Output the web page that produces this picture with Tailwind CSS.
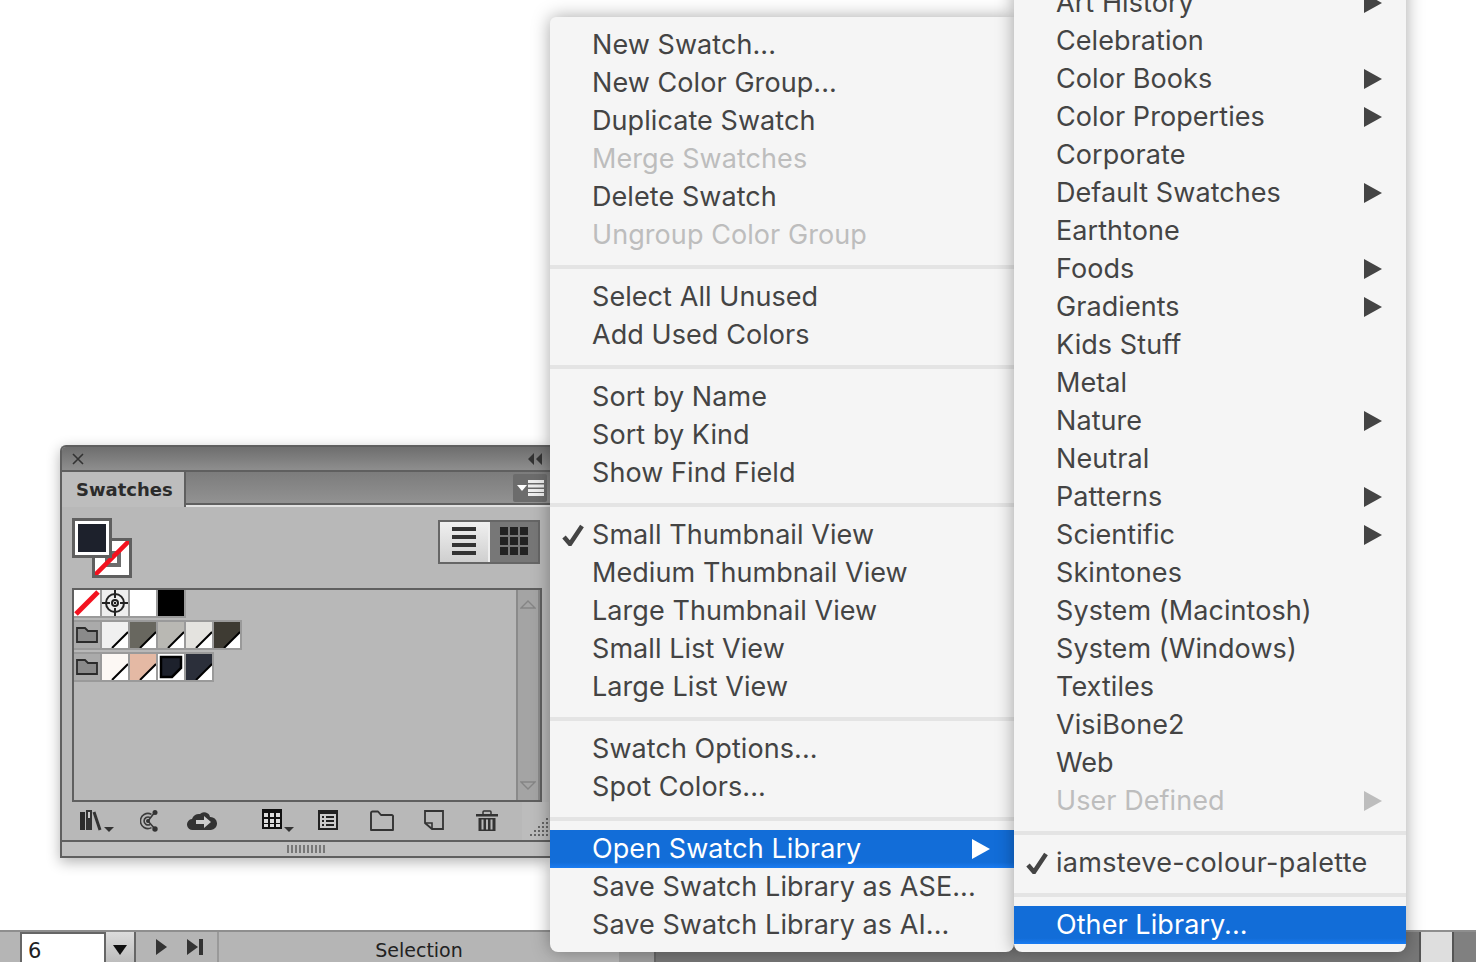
<!DOCTYPE html>
<html lang="en">
<head>
  <meta charset="UTF-8">
  <title>Swatches menu</title>
  <script src="https://cdn.jsdelivr.net/npm/@tailwindcss/browser@4"></script>
</head>
<body class="bg-white">
<div class="relative flex h-[962px] w-[1476px] flex-col justify-end overflow-hidden bg-white">

  <!-- status bar -->
  <div class="flex h-[32px] items-stretch border-t-2 border-[#8e8e8e] bg-[#b5b5b5] font-['DejaVu_Sans',sans-serif] text-[#222]">
    <div class="w-[20px]"></div>
    <div class="flex w-[86px] items-center border-x-2 border-t-2 border-[#666] bg-white pl-[6px] pt-[7px] text-[21px]">6</div>
    <div class="flex w-[30px] items-center justify-center border-r-2 border-[#666] bg-gradient-to-b from-[#dcdcdc] to-[#bdbdbd] pt-[6px]">
      <svg width="14" height="10" viewBox="0 0 14 10"><path d="M0 0h14L7 10z" fill="#111"/></svg>
    </div>
    <div class="flex w-[83px] items-center gap-[20px] border-r-2 border-[#999] pl-[20px]">
      <svg width="11" height="16" viewBox="0 0 11 16"><path d="M0 0l11 8-11 8z" fill="#333"/></svg>
      <svg width="17" height="16" viewBox="0 0 17 16"><path d="M0 0l11 8-11 8z" fill="#333"/><path d="M12 0h4v16h-4z" fill="#333"/></svg>
    </div>
    <div class="flex w-[400px] justify-center pt-[4px] text-[19px]">Selection</div>
    <div class="w-[37px] border-r-2 border-[#666] bg-[#9f9f9f]"></div>
    <div class="flex-1 bg-[#777]"></div>
    <div class="w-[2px] bg-[#555]"></div>
    <div class="w-[31px] bg-[#dedede]"></div>
    <div class="w-[2px] bg-[#555]"></div>
    <div class="w-[22px] bg-[#808080]"></div>
  </div>

  <!-- swatches panel -->
  <div class="absolute left-[60px] top-[445px] flex h-[413px] w-[490px] flex-col rounded-tl-[6px] border-2 border-r-0 border-[#5f5f5f] bg-[#b8b8b8] shadow-[0_4px_14px_rgba(0,0,0,0.3)]">
    <div class="flex h-[25px] shrink-0 items-center justify-between rounded-tl-[4px] border-b-2 border-[#5f5f5f] bg-gradient-to-b from-[#6e6e6e] to-[#8e8e8e] pl-[10px] pr-[8px]">
      <svg width="12" height="12" viewBox="0 0 12 12"><path d="M1 1l10 10M11 1L1 11" stroke="#333" stroke-width="1.6"/></svg>
      <svg width="14" height="12" viewBox="0 0 14 12"><path d="M6 0v12L0 6zM14 0v12L8 6z" fill="#333"/></svg>
    </div>

    <div class="flex h-[35px] shrink-0">
      <div class="flex w-[124px] items-center border-r-2 border-[#5f5f5f] bg-[#bdbdbd] pl-[14px] font-['DejaVu_Sans',sans-serif] text-[18px] font-bold text-[#2b2b2b]">Swatches</div>
      <div class="flex flex-1 flex-col">
        <div class="flex flex-1 items-center justify-end border-b-2 border-[#5f5f5f] bg-gradient-to-b from-[#7c7c7c] to-[#929292] pr-[3px]">
          <div class="flex h-[28px] w-[34px] items-center justify-center gap-[1px] rounded-[2px] bg-[#6c6c6c]">
            <svg width="10" height="6" viewBox="0 0 10 6"><path d="M0 0h10L5 6z" fill="#fff"/></svg>
            <svg width="16" height="16" viewBox="0 0 16 16"><path d="M0 0h16v3H0zM0 4.500h16v3H0zM0 9h16v3H0zM0 13h16v3H0z" fill="#eee"/></svg>
          </div>
        </div>
        <div class="h-[2px] bg-[#e2e2e2]"></div>
      </div>
    </div>

    <div class="flex flex-1 flex-col pl-[10px]">
      <div class="flex h-[81px] shrink-0 items-start justify-between pr-[10px] pt-[11px]">
        <div class="relative h-[60px] w-[60px]">
          <div class="absolute left-[20px] top-[20px] h-[40px] w-[40px] border-[3px] border-[#5f5f5f] bg-white">
            <div class="absolute left-[10px] top-[10px] h-[16px] w-[16px] border-[4px] border-[#6c6c6c]"></div>
            <svg class="absolute inset-0" width="34" height="34" viewBox="0 0 34 34"><path d="M0 34L34 0" stroke="#f3121f" stroke-width="4.500"/></svg>
          </div>
          <div class="absolute left-0 top-0 h-[40px] w-[40px] border-[3px] border-[#5f5f5f]">
            <div class="h-full w-full border-[3px] border-white bg-[#1d212c]"></div>
          </div>
        </div>
        <div class="mt-[2px] flex h-[44px] w-[102px] border-2 border-[#666]">
          <div class="flex w-[48px] items-center justify-center bg-gradient-to-b from-[#f0f0f0] to-[#cfcfcf]">
            <svg width="24" height="30" viewBox="0 0 24 30"><path d="M0 0h24v4H0zM0 8h24v4H0zM0 16h24v4H0zM0 24h24v4H0z" fill="#333"/></svg>
          </div>
          <div class="w-[2px] bg-[#eee]"></div>
          <div class="flex flex-1 items-center justify-center bg-[#777]">
            <svg width="28" height="30" viewBox="0 0 28 30"><path d="M0 0h8v8H0zM10 0h8v8h-8zM20 0h8v8h-8zM0 10h8v8H0zM10 10h8v8h-8zM20 10h8v8h-8zM0 20h8v8H0zM10 20h8v8h-8zM20 20h8v8h-8z" fill="#222"/></svg>
          </div>
        </div>
      </div>

      <div class="flex h-[214px] w-[470px] shrink-0 justify-between border-2 border-[#5f5f5f]">
        <div class="flex flex-col items-start gap-[2px]">
          <div class="flex gap-[2px] bg-[#9a9a9a] pb-[2px] pr-[2px]">
            <svg width="26" height="26" viewBox="0 0 26 26"><rect width="26" height="26" fill="#fff"/><path d="M2 24L24 2" stroke="#f3121f" stroke-width="5"/></svg>
            <svg width="26" height="26" viewBox="0 0 26 26"><rect width="26" height="26" fill="#eee"/><g fill="none" stroke="#222" stroke-width="2"><circle cx="13" cy="13" r="9"/><circle cx="13" cy="13" r="3"/><path d="M13 0v8M13 18v8M0 13h8M18 13h8"/></g><rect x="12" y="12" width="2" height="2" fill="#222"/></svg>
            <div class="h-[26px] w-[26px] bg-white"></div>
            <div class="h-[26px] w-[26px] bg-black"></div>
          </div>
          <div class="flex gap-[2px] bg-[#9a9a9a] py-[2px] pr-[2px]">
            <div class="flex h-[26px] w-[26px] items-center justify-center bg-[#aaa]">
              <svg width="22" height="18" viewBox="0 0 22 18"><path d="M1 16V2h8l3 3h9v11z" fill="#8a8a8a" stroke="#2b2b2b" stroke-width="1.800"/></svg>
            </div>
            <svg width="26" height="26" viewBox="0 0 26 26"><rect width="26" height="26" fill="#f0f0f0"/><path d="M10 26L26 10v16z" fill="#fff"/><path d="M10 26L26 10" stroke="#000" stroke-width="2"/></svg>
            <svg width="26" height="26" viewBox="0 0 26 26"><rect width="26" height="26" fill="#68675f"/><path d="M10 26L26 10v16z" fill="#fff"/><path d="M10 26L26 10" stroke="#000" stroke-width="2"/></svg>
            <svg width="26" height="26" viewBox="0 0 26 26"><rect width="26" height="26" fill="#b9b8b3"/><path d="M10 26L26 10v16z" fill="#fff"/><path d="M10 26L26 10" stroke="#000" stroke-width="2"/></svg>
            <svg width="26" height="26" viewBox="0 0 26 26"><rect width="26" height="26" fill="#e4e3df"/><path d="M10 26L26 10v16z" fill="#fff"/><path d="M10 26L26 10" stroke="#000" stroke-width="2"/></svg>
            <svg width="26" height="26" viewBox="0 0 26 26"><rect width="26" height="26" fill="#3e3b33"/><path d="M10 26L26 10v16z" fill="#fff"/><path d="M10 26L26 10" stroke="#000" stroke-width="2"/></svg>
          </div>
          <div class="flex gap-[2px] bg-[#9a9a9a] py-[2px] pr-[2px]">
            <div class="flex h-[26px] w-[26px] items-center justify-center bg-[#aaa]">
              <svg width="22" height="18" viewBox="0 0 22 18"><path d="M1 16V2h8l3 3h9v11z" fill="#8a8a8a" stroke="#2b2b2b" stroke-width="1.800"/></svg>
            </div>
            <svg width="26" height="26" viewBox="0 0 26 26"><rect width="26" height="26" fill="#fcf8f4"/><path d="M10 26L26 10v16z" fill="#fff"/><path d="M10 26L26 10" stroke="#000" stroke-width="2"/></svg>
            <svg width="26" height="26" viewBox="0 0 26 26"><rect width="26" height="26" fill="#e4b9a4"/><path d="M10 26L26 10v16z" fill="#fff"/><path d="M10 26L26 10" stroke="#000" stroke-width="2"/></svg>
            <svg width="26" height="26" viewBox="0 0 26 26"><rect width="26" height="26" fill="#fff"/><path d="M3 3h20v11L14 23H3z" fill="#1d212c" stroke="#000" stroke-width="2.500"/></svg>
            <svg width="26" height="26" viewBox="0 0 26 26"><rect width="26" height="26" fill="#2b2f3a"/><path d="M10 26L26 10v16z" fill="#fff"/><path d="M10 26L26 10" stroke="#000" stroke-width="2"/></svg>
          </div>
        </div>
        <div class="flex w-[24px] flex-col items-center justify-between border-x-2 border-[#8a8a8a] bg-[#a4a4a4] py-[10px]">
          <svg width="16" height="10" viewBox="0 0 16 10"><path d="M1 8L8 1l7 7z" fill="none" stroke="#858585" stroke-width="1.400"/></svg>
          <svg width="16" height="10" viewBox="0 0 16 10"><path d="M1 2l7 7 7-7z" fill="none" stroke="#858585" stroke-width="1.400"/></svg>
        </div>
      </div>

      <div class="-ml-[10px] flex h-[40px] shrink-0 items-center border-b-2 border-[#5f5f5f]">
        <svg class="ml-[18px]" width="34" height="24" viewBox="0 0 34 24"><path d="M0 3h5v18H0z" fill="#2b2b2b"/><path d="M6 1h6v20H6z" fill="#333"/><path d="M8 3h2v6H8z" fill="#ccc"/><path d="M14 3l6 18" stroke="#333" stroke-width="3"/><path d="M24 18h10l-5 5z" fill="#333"/></svg>
        <svg class="ml-[26px]" width="18" height="22" viewBox="0 0 18 22"><g fill="none" stroke="#3a3a3a" stroke-width="1.600"><path d="M11.500 4.400A7.500 7.500 0 1 0 11.500 17.600"/><path d="M10 7.500A4 4 0 1 0 10 14.500"/><path d="M8 11L15 2M8 11L15 19"/></g><circle cx="15" cy="2.500" r="2.500" fill="#333"/><circle cx="15" cy="19" r="2.700" fill="#333"/><circle cx="8" cy="11" r="2" fill="#333"/></svg>
        <svg class="ml-[29px]" width="30" height="22" viewBox="0 0 30 22"><path d="M6 20a5.500 5.500 0 0 1-1-11 7 7 0 0 1 8-5 6 6 0 0 1 10 3 6.500 6.500 0 0 1 1 13z" fill="#333"/><path d="M9 10h8V6l7 6-7 6v-4H9z" fill="#ccc"/></svg>
        <svg class="ml-[45px]" width="32" height="24" viewBox="0 0 32 24"><path d="M0 0h20v20H0z" fill="#111"/><path d="M2 4h4v4H2zM8 4h4v4H8zM14 4h4v4h-4zM2 10h4v4H2zM8 10h4v4H8zM14 10h4v4h-4zM2 15h4v3H2zM8 15h4v3H8zM14 15h4v3h-4z" fill="#ddd"/><path d="M22 18h10l-5 5z" fill="#333"/></svg>
        <svg class="ml-[24px]" width="20" height="22" viewBox="0 0 20 22"><path d="M0 0h20v20H0z" fill="#222"/><path d="M2 4h16v14H2z" fill="#ccc"/><path d="M4 6h2v2H4zM8 6h8v2H8zM4 10h2v2H4zM8 10h8v2H8zM4 14h2v2H4zM8 14h8v2H8z" fill="#222"/></svg>
        <svg class="ml-[32px]" width="24" height="22" viewBox="0 0 24 22"><path d="M1 20V3a1.500 1.500 0 0 1 1.500-1.500H8l3 3.500h10.500A1.500 1.500 0 0 1 23 7v13z" fill="none" stroke="#333" stroke-width="1.900" stroke-linejoin="round"/></svg>
        <svg class="ml-[30px]" width="20" height="22" viewBox="0 0 20 22"><path d="M1 1h18v18H8L1 13z" fill="none" stroke="#333" stroke-width="1.800"/><path d="M1 13h7v6" fill="none" stroke="#333" stroke-width="1.600"/></svg>
        <svg class="ml-[32px]" width="22" height="22" viewBox="0 0 22 22"><path d="M7 4V2a1 1 0 0 1 1-1h6a1 1 0 0 1 1 1v2" fill="none" stroke="#333" stroke-width="1.500"/><path d="M0 4h22v2.500H0z" fill="#333"/><path d="M2.500 8h17v13h-17z" fill="#333"/><path d="M5.500 9.500h2v10h-2zM10 9.500h2v10h-2zM14.500 9.500h2v10h-2z" fill="#b8b8b8"/></svg>
        <svg class="ml-[24px] self-start bg-[#bcbcbc]" width="27" height="38" viewBox="0 0 27 38"><path d="M24 16h2v2h-2zM24 20h2v2h-2zM24 24h2v2h-2zM24 28h2v2h-2zM24 32h2v2h-2zM20 20h2v2h-2zM20 24h2v2h-2zM20 28h2v2h-2zM20 32h2v2h-2zM16 24h2v2h-2zM16 28h2v2h-2zM16 32h2v2h-2zM12 28h2v2h-2zM12 32h2v2h-2zM8 32h2v2H8z" fill="#666"/></svg>
      </div>

      <div class="-ml-[10px] flex flex-1 items-center justify-center bg-[#c0c0c0]">
        <div class="h-[8px] w-[38px] bg-[repeating-linear-gradient(90deg,#777_0_2px,transparent_2px_4px)]"></div>
      </div>
    </div>
  </div>

  <!-- panel menu -->
  <div class="absolute left-[550px] top-[17px] h-[935px] w-[464px] rounded-b-[8px] rounded-tl-[6px] bg-[#f5f5f5] pt-[9px] font-['Inter',sans-serif] text-[27px] tracking-[0.07px] text-[#444] shadow-[0_0_18px_rgba(0,0,0,0.35)]">
    <div class="flex h-[38px] items-center pl-[42px]">New Swatch...</div>
    <div class="flex h-[38px] items-center pl-[42px]">New Color Group...</div>
    <div class="flex h-[38px] items-center pl-[42px]">Duplicate Swatch</div>
    <div class="flex h-[38px] items-center pl-[42px] text-[#bdbdbd]">Merge Swatches</div>
    <div class="flex h-[38px] items-center pl-[42px]">Delete Swatch</div>
    <div class="flex h-[38px] items-center pl-[42px] text-[#bdbdbd]">Ungroup Color Group</div>
    <div class="mb-[9px] mt-[11px] h-[4px] bg-[#e4e4e4]"></div>
    <div class="flex h-[38px] items-center pl-[42px]">Select All Unused</div>
    <div class="flex h-[38px] items-center pl-[42px]">Add Used Colors</div>
    <div class="mb-[9px] mt-[11px] h-[4px] bg-[#e4e4e4]"></div>
    <div class="flex h-[38px] items-center pl-[42px]">Sort by Name</div>
    <div class="flex h-[38px] items-center pl-[42px]">Sort by Kind</div>
    <div class="flex h-[38px] items-center pl-[42px]">Show Find Field</div>
    <div class="mb-[9px] mt-[11px] h-[4px] bg-[#e4e4e4]"></div>
    <div class="flex h-[38px] items-center pl-[12px]">
      <svg class="mr-[8px]" width="22" height="22" viewBox="0 0 22 22"><path d="M2 13l6 7L20 2" fill="none" stroke="#444" stroke-width="4.500"/></svg>
      Small Thumbnail View
    </div>
    <div class="flex h-[38px] items-center pl-[42px]">Medium Thumbnail View</div>
    <div class="flex h-[38px] items-center pl-[42px]">Large Thumbnail View</div>
    <div class="flex h-[38px] items-center pl-[42px]">Small List View</div>
    <div class="flex h-[38px] items-center pl-[42px]">Large List View</div>
    <div class="mb-[9px] mt-[11px] h-[4px] bg-[#e4e4e4]"></div>
    <div class="flex h-[38px] items-center pl-[42px]">Swatch Options...</div>
    <div class="flex h-[38px] items-center pl-[42px]">Spot Colors...</div>
    <div class="mb-[9px] mt-[11px] h-[4px] bg-[#e4e4e4]"></div>
    <div class="flex h-[38px] items-center justify-between bg-gradient-to-b from-[#126dd8] from-85% to-[#1a7cf2] pl-[42px] pr-[24px] text-white">
      Open Swatch Library
      <svg width="18" height="20" viewBox="0 0 18 20"><path d="M0 0l18 10L0 20z" fill="#fff"/></svg>
    </div>
    <div class="flex h-[38px] items-center pl-[42px]">Save Swatch Library as ASE...</div>
    <div class="flex h-[38px] items-center pl-[42px]">Save Swatch Library as AI...</div>
  </div>

  <!-- library submenu -->
  <div class="absolute left-[1014px] top-[-24px] h-[976px] w-[392px] rounded-b-[8px] bg-[#f5f5f5] font-['Inter',sans-serif] text-[27px] tracking-[0.07px] text-[#444] shadow-[0_0_18px_rgba(0,0,0,0.35)]">
    <div class="h-[8px]"></div>
    <div class="flex h-[38px] items-center justify-between pl-[42px] pr-[24px]">Art History<svg width="18" height="20" viewBox="0 0 18 20"><path d="M0 0l18 10L0 20z" fill="#444"/></svg></div>
    <div class="flex h-[38px] items-center justify-between pl-[42px] pr-[24px]">Celebration</div>
    <div class="flex h-[38px] items-center justify-between pl-[42px] pr-[24px]">Color Books<svg width="18" height="20" viewBox="0 0 18 20"><path d="M0 0l18 10L0 20z" fill="#444"/></svg></div>
    <div class="flex h-[38px] items-center justify-between pl-[42px] pr-[24px]">Color Properties<svg width="18" height="20" viewBox="0 0 18 20"><path d="M0 0l18 10L0 20z" fill="#444"/></svg></div>
    <div class="flex h-[38px] items-center justify-between pl-[42px] pr-[24px]">Corporate</div>
    <div class="flex h-[38px] items-center justify-between pl-[42px] pr-[24px]">Default Swatches<svg width="18" height="20" viewBox="0 0 18 20"><path d="M0 0l18 10L0 20z" fill="#444"/></svg></div>
    <div class="flex h-[38px] items-center justify-between pl-[42px] pr-[24px]">Earthtone</div>
    <div class="flex h-[38px] items-center justify-between pl-[42px] pr-[24px]">Foods<svg width="18" height="20" viewBox="0 0 18 20"><path d="M0 0l18 10L0 20z" fill="#444"/></svg></div>
    <div class="flex h-[38px] items-center justify-between pl-[42px] pr-[24px]">Gradients<svg width="18" height="20" viewBox="0 0 18 20"><path d="M0 0l18 10L0 20z" fill="#444"/></svg></div>
    <div class="flex h-[38px] items-center justify-between pl-[42px] pr-[24px]">Kids Stuff</div>
    <div class="flex h-[38px] items-center justify-between pl-[42px] pr-[24px]">Metal</div>
    <div class="flex h-[38px] items-center justify-between pl-[42px] pr-[24px]">Nature<svg width="18" height="20" viewBox="0 0 18 20"><path d="M0 0l18 10L0 20z" fill="#444"/></svg></div>
    <div class="flex h-[38px] items-center justify-between pl-[42px] pr-[24px]">Neutral</div>
    <div class="flex h-[38px] items-center justify-between pl-[42px] pr-[24px]">Patterns<svg width="18" height="20" viewBox="0 0 18 20"><path d="M0 0l18 10L0 20z" fill="#444"/></svg></div>
    <div class="flex h-[38px] items-center justify-between pl-[42px] pr-[24px]">Scientific<svg width="18" height="20" viewBox="0 0 18 20"><path d="M0 0l18 10L0 20z" fill="#444"/></svg></div>
    <div class="flex h-[38px] items-center justify-between pl-[42px] pr-[24px]">Skintones</div>
    <div class="flex h-[38px] items-center justify-between pl-[42px] pr-[24px]">System (Macintosh)</div>
    <div class="flex h-[38px] items-center justify-between pl-[42px] pr-[24px]">System (Windows)</div>
    <div class="flex h-[38px] items-center justify-between pl-[42px] pr-[24px]">Textiles</div>
    <div class="flex h-[38px] items-center justify-between pl-[42px] pr-[24px]">VisiBone2</div>
    <div class="flex h-[38px] items-center justify-between pl-[42px] pr-[24px]">Web</div>
    <div class="flex h-[38px] items-center justify-between pl-[42px] pr-[24px] text-[#bdbdbd]">User Defined<svg width="18" height="20" viewBox="0 0 18 20"><path d="M0 0l18 10L0 20z" fill="#bdbdbd"/></svg></div>
    <div class="mb-[9px] mt-[11px] h-[4px] bg-[#e4e4e4]"></div>
    <div class="flex h-[38px] items-center pl-[12px] tracking-[0.3px]">
      <svg class="mr-[8px]" width="22" height="22" viewBox="0 0 22 22"><path d="M2 13l6 7L20 2" fill="none" stroke="#444" stroke-width="4.500"/></svg>
      iamsteve-colour-palette
    </div>
    <div class="mb-[9px] mt-[11px] h-[4px] bg-[#e4e4e4]"></div>
    <div class="flex h-[38px] items-center bg-gradient-to-b from-[#126dd8] from-85% to-[#1a7cf2] pl-[42px] text-white">Other Library...</div>
  </div>
</div>
</body>
</html>
